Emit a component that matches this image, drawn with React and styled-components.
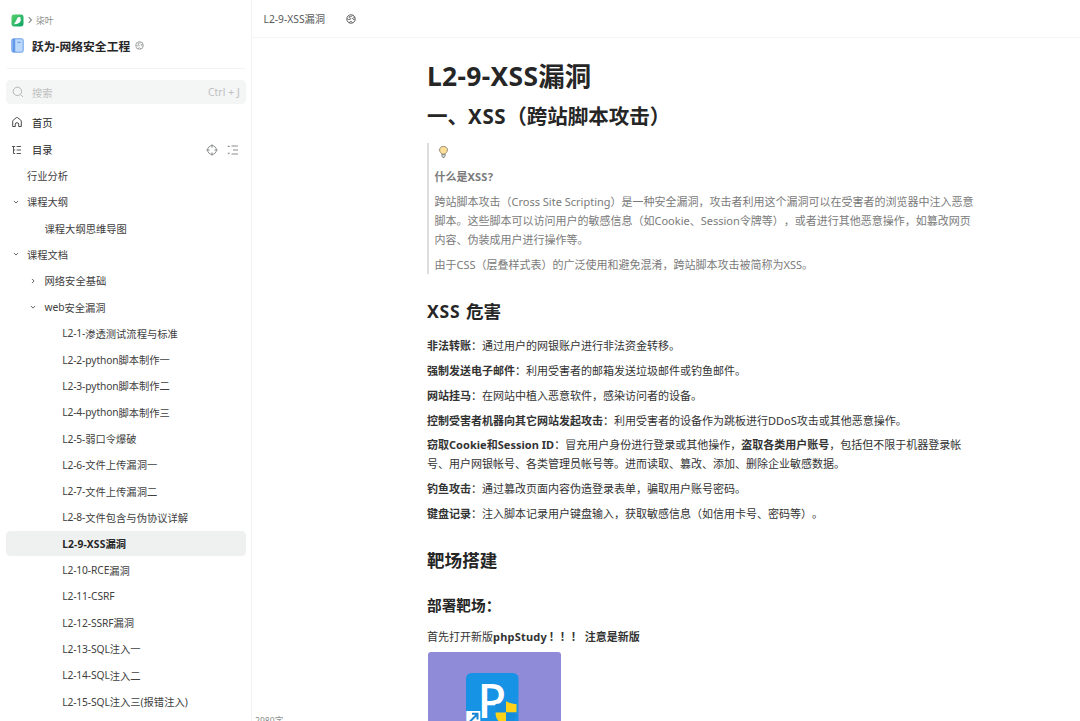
import React from 'react'
import styled, { createGlobalStyle } from 'styled-components'

const GlobalStyle = createGlobalStyle`
* {
    box-sizing: border-box;
}
body {
    margin: 0;
    background: #fff;
    color: #262626;
    font-family: "Noto Sans", "Noto Sans CJK SC", sans-serif;
    text-spacing-trim: space-all;
    overflow: hidden;
}
`

const Page = styled.div`
display: flex;
width: 100%;
height: 721px;
overflow: hidden;
`

const Sidebar = styled.aside`
width: 252px;
flex-shrink: 0;
height: 100%;
border-right: 1px solid #f1f2f2;
padding: 0 5px 0 6px;
overflow: hidden;
`

const Crumb = styled.div`
display: flex;
align-items: center;
height: 14px;
margin-top: 13px;
padding-left: 5px;
font-size: 8.8px;
color: #8a8f8d;
svg:nth-child(2) {
    margin: 0 2px 0 2px;
}
`

const BookTitle = styled.div`
display: flex;
align-items: center;
height: 22px;
margin-top: 7px;
padding-left: 5px;
font-size: 11.75px;
font-weight: 700;
color: #262626;
span {
    margin: 0 5px 0 8px;
    letter-spacing: 0.06px;
}
`

const Divider = styled.div`
height: 1px;
margin: 12px 1px 0;
background: #f1f2f2;
`

const Search = styled.div`
display: flex;
align-items: center;
height: 24px;
margin-top: 11px;
padding: 0 6px 0 6px;
border-radius: 4.5px;
background: #f4f5f5;
color: #bec0bf;
font-size: 10.27px;
span {
    flex: 1;
    margin-left: 8px;
}
`

const Shortcut = styled.kbd`
font: inherit;
letter-spacing: 0.12px;
`

const MenuRow = styled.div`
display: flex;
align-items: center;
height: 27.4px;
margin-top: ${(props) => props.$top || 0}px;
padding: 0 7px 0 5px;
font-size: 10.27px;
span {
    flex: 1;
    margin-left: 9px;
}
svg + svg {
    margin-left: 9px;
}
`

const Tree = styled.div`
display: flex;
flex-direction: column;
gap: 1.71px;
`

const TreeRow = styled.div`
display: flex;
align-items: center;
flex-shrink: 0;
height: 24.6px;
padding-left: ${(props) => 3 + props.$level * 17.6}px;
border-radius: 4.5px;
font-size: 10.27px;
white-space: nowrap;
background: ${(props) => (props.$active ? '#eff0f0' : 'transparent')};
font-weight: ${(props) => (props.$active ? 700 : 400)};
color: ${(props) => (props.$active ? '#262626' : '#404040')};
`

const Caret = styled.span`
display: flex;
justify-content: center;
width: 13px;
margin-right: 5px;
`

const Main = styled.main`
flex: 1;
min-width: 0;
position: relative;
`

const Header = styled.header`
display: flex;
align-items: center;
height: 38px;
padding-left: 11.5px;
border-bottom: 1px solid #f4f5f5;
font-size: 10.27px;
color: #585a5a;
svg {
    margin-left: 21px;
}
`

const Article = styled.article`
width: 549px;
margin-left: 175px;
padding-top: 20px;
`

const Title = styled.h1`
margin: 0;
font-size: 26.4px;
line-height: 36px;
`

const Heading = styled.h2`
margin: ${(props) => props.$top}px 0 0;
font-size: ${(props) => props.$size}px;
line-height: 26px;
`

const Quote = styled.blockquote`
margin: 14px 0 0;
padding-left: 5.5px;
border-left: 2px solid #dcdddd;
color: #7a7a7a;
`

const Text = styled.p`
margin: ${(props) => (props.$first ? 0 : 5.75)}px 0 0;
min-height: 19.07px;
font-size: 11px;
line-height: 19.07px;
white-space: nowrap;
b {
    font-weight: 700;
}
`

const BulbLine = styled.div`
display: flex;
align-items: center;
height: 19px;
padding-left: 3px;
`

const Body = styled.div`
margin-top: ${(props) => props.$top}px;
color: #333;
`

const Bangs = styled.span`
margin-left: 2px;
`

const Shot = styled.svg`
display: block;
margin: 5.5px 0 0 1px;
border-radius: 3px;
`

const WordCount = styled.div`
position: absolute;
left: 3px;
top: 714px;
font-size: 8.6px;
line-height: 14px;
color: #8a8f8d;
`

const Run = styled.span`
&& {
    margin: 0;
    letter-spacing: ${(props) => props.$track}em;
}
`

const Mixed = ({ children, track = 0 }) =>
  children.split(/([A-Za-z0-9][A-Za-z0-9 -]*)/).map((part, key) =>
    key % 2 ? <Run key={key} $track={track}>{part}</Run> : part
  )

const Logo = () => (
  <svg width="13" height="13" viewBox="0 0 13 13">
    <defs>
      <linearGradient id="leaf" x1="0" y1="0" x2="1" y2="1">
        <stop offset="0" stopColor="#5bd16b" />
        <stop offset="1" stopColor="#0aa266" />
      </linearGradient>
    </defs>
    <rect x=".5" y=".5" width="12" height="12" rx="2.4" fill="url(#leaf)" />
    <path d="M2.8 10.2C4 8.600 4.800 7.400 5.500 5.900C6.200 4.300 6.600 3.300 8.200 3.100L9.700 3.200L9.300 3.900C10 5.200 9.900 6.600 9.200 7.800C8.200 9.500 6 10.300 2.800 10.200Z" fill="#fff" />
  </svg>
)

const Book = () => (
  <svg width="13" height="15" viewBox="0 0 13 15">
    <rect x=".8" y=".8" width="11.400" height="13.400" rx="1.500" fill="#bcd8fb" stroke="#6b9de8" />
    <path d="M1.500 1H4.200V14H1.500Z" fill="#6499ea" />
    <path d="M6.300 4.300H9.800" stroke="#6499ea" />
  </svg>
)

const Globe = ({ color, size = 9 }) => (
  <svg width={size} height={size} viewBox="0 0 12 12" fill="none" stroke={color}>
    <circle cx="6" cy="6" r="5.100" />
    <path d="M1.200 5.300C2.400 6.800 4.200 7 5.200 6.400C6.300 5.700 5.600 4.500 4.400 4.700C3.500 4.700 3.300 3.200 4.800 2.800C6.200 2.500 7.200 3.300 8.200 1.700" />
    <path d="M10.800 4.800C9.300 3.900 7.700 4.600 8 5.800C8.400 7 9.700 6.400 10.700 7.200M4 10.600C4.600 8.600 6.800 8.300 7.800 10.500" />
  </svg>
)

const Chevron = ({ down, size = 6, color = '#555' }) => (
  <svg width={size} height={size} viewBox="0 0 8 8" fill="none" stroke={color} strokeWidth="1.2">
    <path d={down ? 'M1.200 2.700L4 5.400L6.800 2.700' : 'M2.700 1.200L5.400 4L2.700 6.800'} />
  </svg>
)

const SearchIcon = () => (
  <svg width="12" height="12" viewBox="0 0 12 12" fill="none" stroke="#b4b7b6">
    <circle cx="5.400" cy="5.400" r="4.200" />
    <path d="M8.500 8.500L11 11" />
  </svg>
)

const HomeIcon = () => (
  <svg width="12" height="12" viewBox="0 0 12 12" fill="none" stroke="#484a49" strokeLinejoin="round">
    <path d="M4.300 10.500H1.700V5.200Q1.700 4.600 2.200 4.200L5.300 1.700Q6 1.200 6.700 1.700L9.800 4.200Q10.300 4.600 10.300 5.200V10.500H7.700V8.200Q7.700 6.700 6 6.700Q4.300 6.700 4.300 8.200Z" />
  </svg>
)

const TocIcon = () => (
  <svg width="12" height="12" viewBox="0 0 12 12" fill="none" stroke="#555756">
    <path d="M1 2.500H4.200M2.500 2.500V9.500H4.200M2.500 6H4.200M5.600 2.500H10M5.600 6H10M5.600 9.500H10" />
  </svg>
)

const TargetIcon = () => (
  <svg width="12" height="12" viewBox="0 0 12 12" fill="none" stroke="#8a8f8d">
    <circle cx="6" cy="6" r="4.400" />
    <path d="M6 .3V3.600M6 8.400V11.700M.3 6H3.600M8.400 6H11.700" />
  </svg>
)

const ListIcon = () => (
  <svg width="12" height="12" viewBox="0 0 12 12" fill="none" stroke="#8a8f8d">
    <path d="M4.500 2H11M6 6H11M4.500 10H11" />
    <path d="M.5 2.900L1.800 1.200L3.100 2.900ZM.5 8.800L1.800 10.500L3.100 8.800Z" fill="#8a8f8d" stroke="none" />
  </svg>
)

const Bulb = () => (
  <svg width="11" height="14" viewBox="0 0 12 14">
    <path d="M4 9.500C4 8 1.700 7.200 1.700 4.900C1.700 2.500 3.500 .9 6 .9S10.300 2.500 10.300 4.900C10.300 7.200 8 8 8 9.500Z" fill="#fddf9a" stroke="#84775d" strokeWidth=".9" />
    <path d="M4.300 9.500H7.700V11.700L6.800 13H5.200L4.300 11.700Z" fill="#d5d7d8" stroke="#6b6d6e" strokeWidth=".8" />
  </svg>
)

const PhpStudy = () => (
  <Shot width="133" height="90" viewBox="0 0 133 90">
    <rect width="133" height="90" fill="#8f8bd8" />
    <rect x="38" y="21" width="52.500" height="53" rx="5.500" fill="#1793e6" />
    <text x="49.500" y="65.500" fontSize="47" fontWeight="500" fill="#fff">P</text>
    <rect x="38.300" y="59" width="14" height="15" fill="#fff" />
    <path d="M41.500 70L49 62.500M44 61.800H49.500V67.500" fill="none" stroke="#1685d2" strokeWidth="2" />
    <path d="M78 49C75 51.400 71 52 67.500 52V60.500H78Z" fill="#168cdd" />
    <path d="M78 49C81 51.400 85 52 88.500 52V60.500H78Z" fill="#ffd21a" />
    <path d="M67.500 60.500H78V74C71 71 67.500 67 67.500 60.500Z" fill="#ffd21a" />
    <path d="M88.500 60.500H78V74C85 71 88.500 67 88.500 60.500Z" fill="#168cdd" />
  </Shot>
)

const docs = [
  { name: '行业分析', level: 0 },
  { name: '课程大纲', level: 0, caret: 'down' },
  { name: '课程大纲思维导图', level: 1 },
  { name: '课程文档', level: 0, caret: 'down' },
  { name: '网络安全基础', level: 1, caret: 'right' },
  { name: 'web安全漏洞', level: 1, caret: 'down' },
  { name: 'L2-1-渗透测试流程与标准', level: 2 },
  { name: 'L2-2-python脚本制作一', level: 2 },
  { name: 'L2-3-python脚本制作二', level: 2 },
  { name: 'L2-4-python脚本制作三', level: 2 },
  { name: 'L2-5-弱口令爆破', level: 2 },
  { name: 'L2-6-文件上传漏洞一', level: 2 },
  { name: 'L2-7-文件上传漏洞二', level: 2 },
  { name: 'L2-8-文件包含与伪协议详解', level: 2 },
  { name: 'L2-9-XSS漏洞', level: 2, active: true },
  { name: 'L2-10-RCE漏洞', level: 2 },
  { name: 'L2-11-CSRF', level: 2 },
  { name: 'L2-12-SSRF漏洞', level: 2 },
  { name: 'L2-13-SQL注入一', level: 2 },
  { name: 'L2-14-SQL注入二', level: 2 },
  { name: 'L2-15-SQL注入三(报错注入)', level: 2 },
]

const App = () => {
  return (
    <Page>
      <GlobalStyle />
      <Sidebar>
        <Crumb>
          <Logo />
          <Chevron size={8} color="#8a8f8d" />
          柒叶
        </Crumb>
        <BookTitle>
          <Book />
          <span>跃为-网络安全工程</span>
          <Globe color="#8a8f8d" />
        </BookTitle>
        <Divider />
        <Search>
          <SearchIcon />
          <span>搜索</span>
          <Shortcut>Ctrl + J</Shortcut>
        </Search>
        <MenuRow $top={4.500}>
          <HomeIcon />
          <span>首页</span>
        </MenuRow>
        <MenuRow>
          <TocIcon />
          <span>目录</span>
          <TargetIcon />
          <ListIcon />
        </MenuRow>
        <Tree>
          {docs.map((item, key) => {
            return (
              <TreeRow key={key} $level={item.level} $active={item.active}>
                <Caret>{item.caret && <Chevron down={item.caret === 'down'} />}</Caret>
                <Mixed track={item.active ? 0.012 : -0.012}>{item.name}</Mixed>
              </TreeRow>
            )
          })}
        </Tree>
      </Sidebar>
      <Main>
        <Header>
          <Mixed>L2-9-XSS漏洞</Mixed>
          <Globe color="#484a49" size={10} />
        </Header>
        <Article>
          <Title><Mixed track={0.013}>L2-9-XSS漏洞</Mixed></Title>
          <Heading $top={8.500} $size={20.53}><Mixed track={0.03}>一、XSS（跨站脚本攻击）</Mixed></Heading>
          <Quote>
            <BulbLine><Bulb /></BulbLine>
            <Text><b><Mixed track={0.02}>什么是XSS?</Mixed></b></Text>
            <Text>
              <Mixed>跨站脚本攻击（Cross Site Scripting）是一种安全漏洞，攻击者利用这个漏洞可以在受害者的浏览器中注入恶意</Mixed><br />
              <Mixed>脚本。这些脚本可以访问用户的敏感信息（如Cookie、Session令牌等），或者进行其他恶意操作，如篡改网页</Mixed><br />
              内容、伪装成用户进行操作等。
            </Text>
            <Text><Mixed>由于CSS（层叠样式表）的广泛使用和避免混淆，跨站脚本攻击被简称为XSS。</Mixed></Text>
          </Quote>
          <Heading $top={24.400} $size={17.6}><Mixed track={0.045}>XSS 危害</Mixed></Heading>
          <Body $top={11.700}>
            <Text $first><b>非法转账</b>：通过用户的网银账户进行非法资金转移。</Text>
            <Text><b>强制发送电子邮件</b>：利用受害者的邮箱发送垃圾邮件或钓鱼邮件。</Text>
            <Text><b>网站挂马</b>：在网站中植入恶意软件，感染访问者的设备。</Text>
            <Text><b>控制受害者机器向其它网站发起攻击</b>：<Mixed>利用受害者的设备作为跳板进行DDoS攻击或其他恶意操作。</Mixed></Text>
            <Text>
              <b><Mixed track={0.003}>窃取Cookie和Session ID</Mixed></b>：冒充用户身份进行登录或其他操作，<b>盗取各类用户账号</b>，包括但不限于机器登录帐<br />
              号、用户网银帐号、各类管理员帐号等。进而读取、篡改、添加、删除企业敏感数据。
            </Text>
            <Text><b>钓鱼攻击</b>：通过篡改页面内容伪造登录表单，骗取用户账号密码。</Text>
            <Text><b>键盘记录</b>：注入脚本记录用户键盘输入，获取敏感信息（如信用卡号、密码等）。</Text>
          </Body>
          <Heading $top={24} $size={17.6}>靶场搭建</Heading>
          <Heading $top={19} $size={14.67}>部署靶场：</Heading>
          <Body $top={9.300}>
            <Text $first>首先打开新版<b><Mixed track={0.018}>phpStudy</Mixed><Bangs>！！！</Bangs> 注意是新版</b></Text>
          </Body>
          <PhpStudy />
        </Article>
        <WordCount>2980字</WordCount>
      </Main>
    </Page>
  )
}

export default App
